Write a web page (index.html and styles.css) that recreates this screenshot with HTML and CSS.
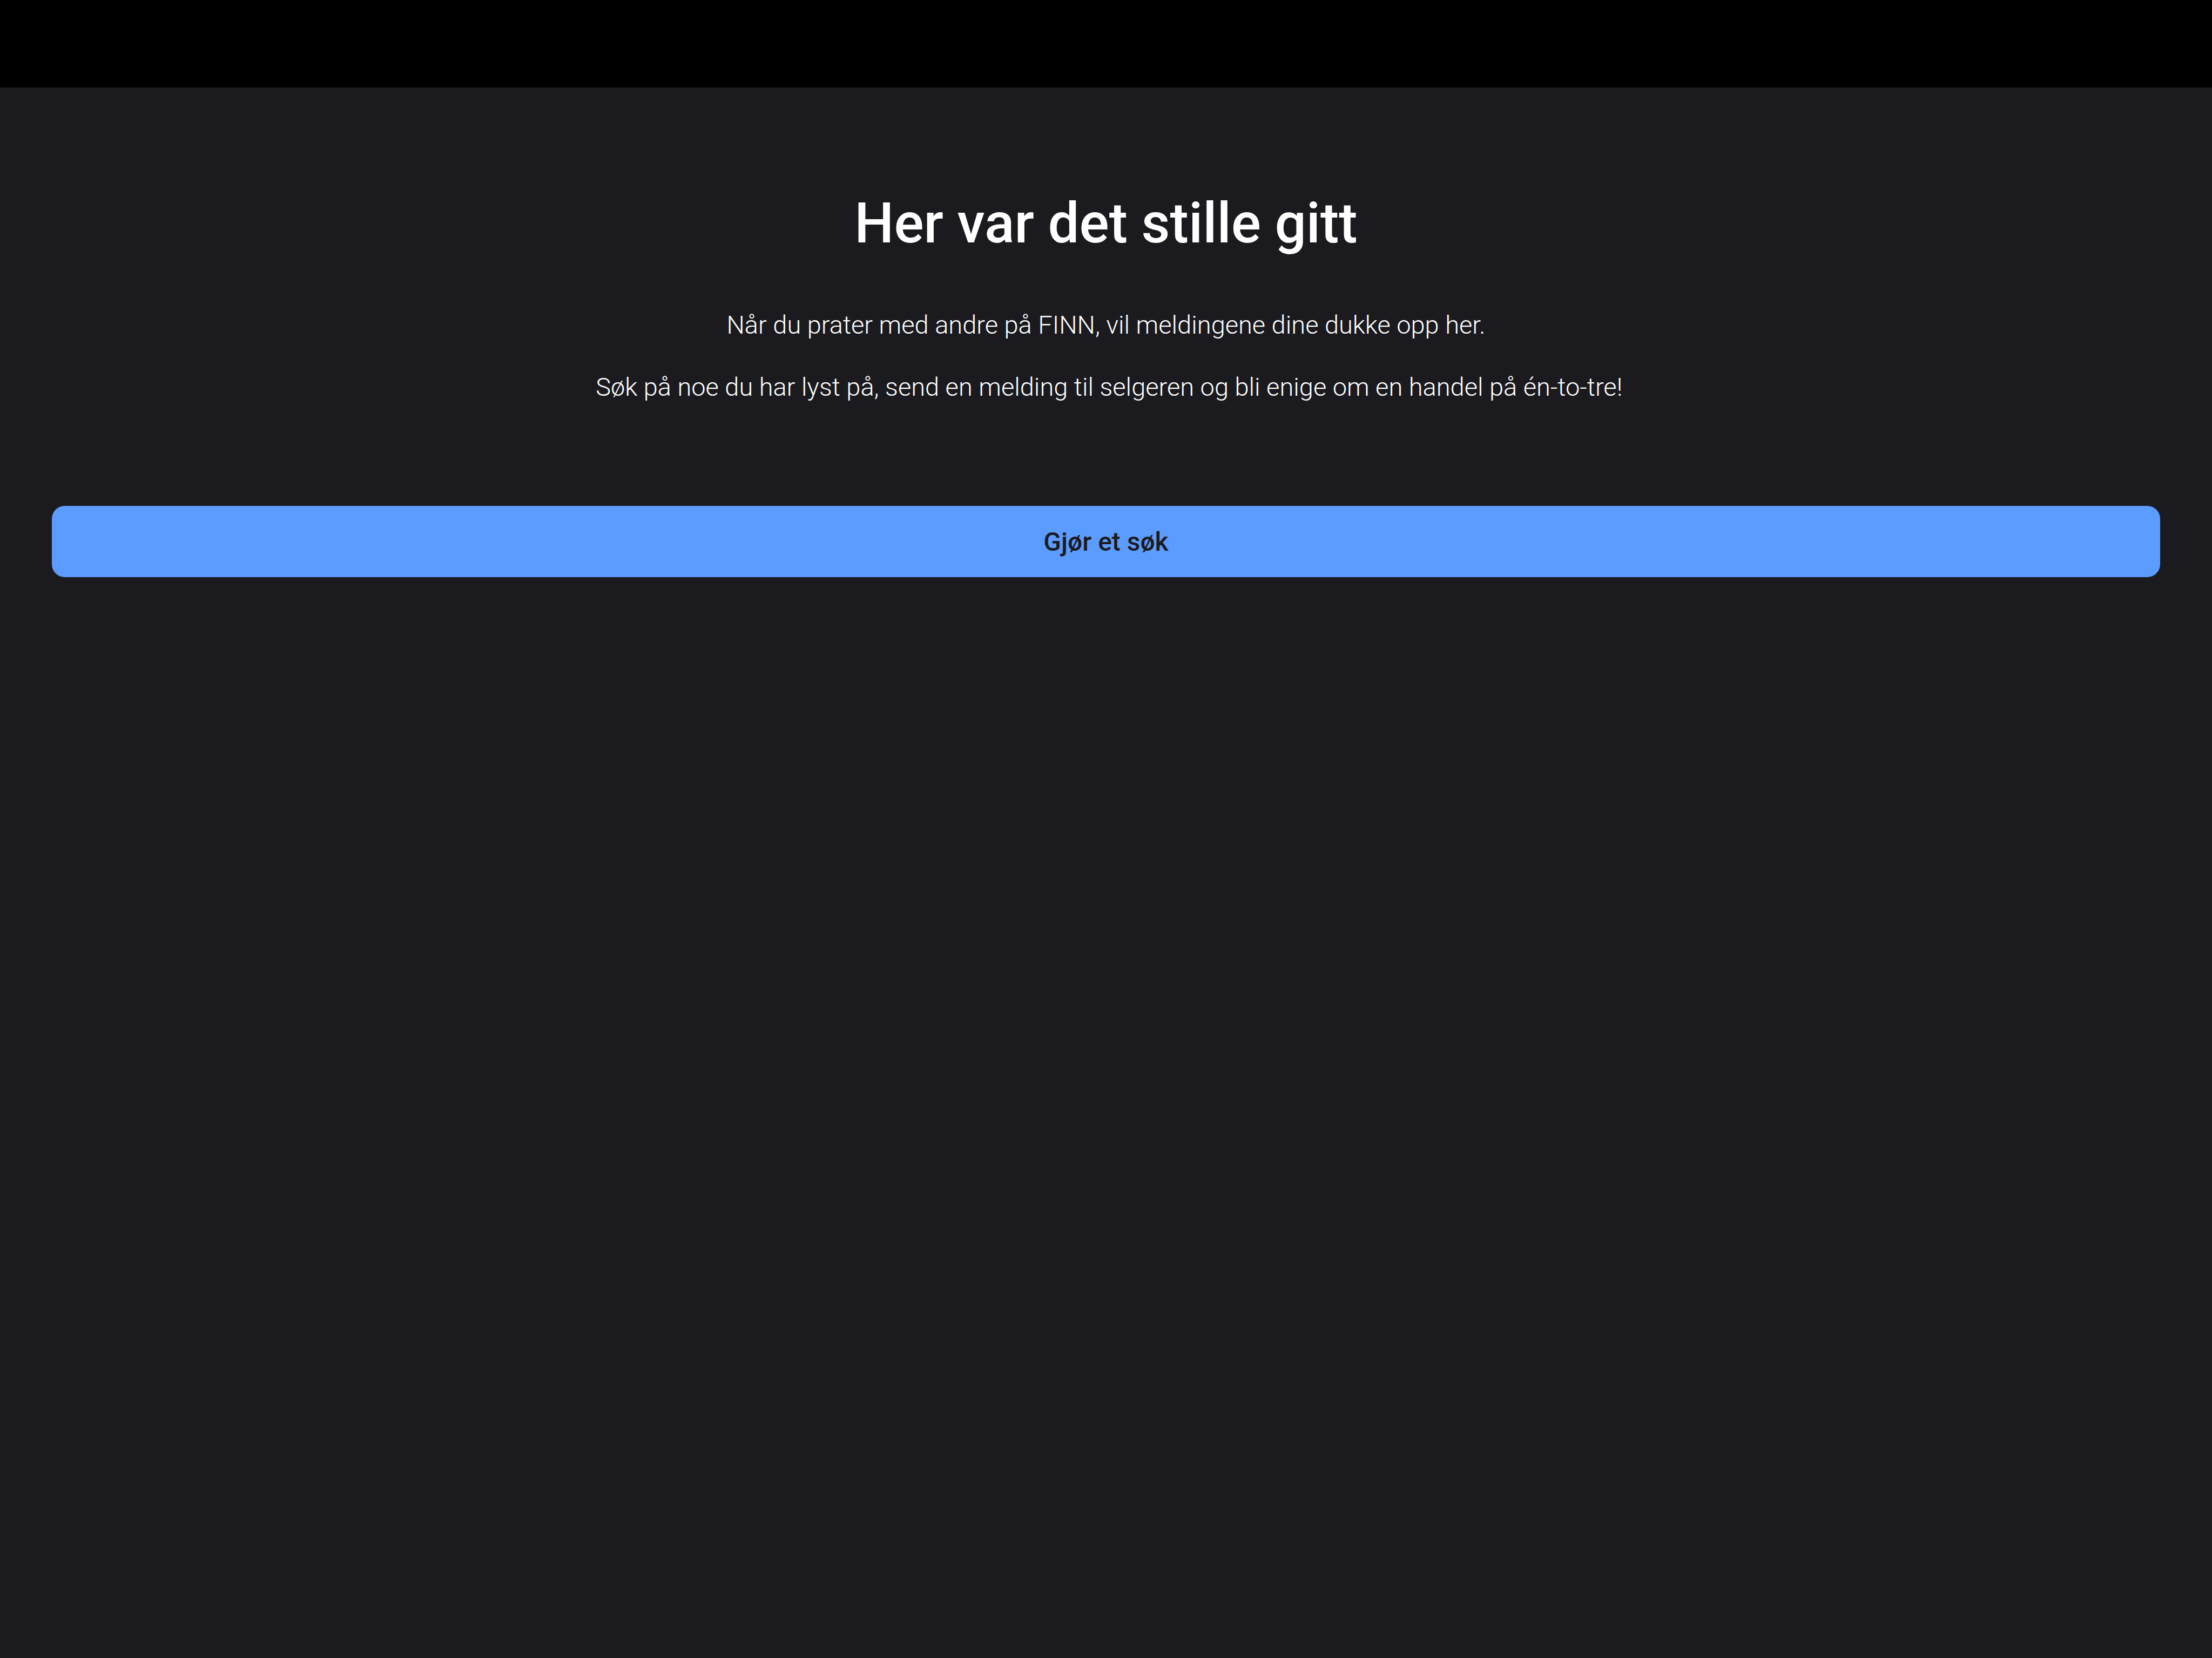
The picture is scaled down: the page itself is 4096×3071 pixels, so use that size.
FILE: index.html
```html
<!DOCTYPE html>
<html lang="nb">
<head>
<meta charset="utf-8">
<title>Meldinger</title>
<link rel="stylesheet" href="styles.css">
</head>
<body>
<header class="topbar"></header>
<main class="empty">
<h1 class="title">Her var det stille gitt</h1>
<p class="text">Når du prater med andre på FINN, vil meldingene dine dukke opp her.</p>
<p class="text">&nbsp;Søk på noe du har lyst på, send en melding til selgeren og bli enige om en handel på én-to-tre!</p>
<button class="action" type="button">Gjør et søk</button>
</main>
</body>
</html>
```
FILE: styles.css
```css
* { box-sizing: border-box; }
body {
  margin: 0;
  min-height: 100vh;
  background: #1b1b1f;
  color: #fff;
  font-family: Roboto, "Liberation Sans", sans-serif;
}
.topbar { height: 162px; background: #000; }
.empty {
  display: flex;
  flex-direction: column;
  padding: 182px 96px 96px;
  text-align: center;
}
.title {
  margin: 0 0 82px;
  font-size: 103px;
  line-height: 140px;
  font-weight: 500;
}
.text {
  margin: 0 0 43px;
  font-size: 47px;
  line-height: 72px;
  font-weight: 300;
}
.action {
  margin-top: 141px;
  height: 132px;
  border: 0;
  border-radius: 24px;
  background: #5c9cff;
  color: #1b1b1f;
  font: inherit;
  font-size: 48px;
  font-weight: 500;
}
```
